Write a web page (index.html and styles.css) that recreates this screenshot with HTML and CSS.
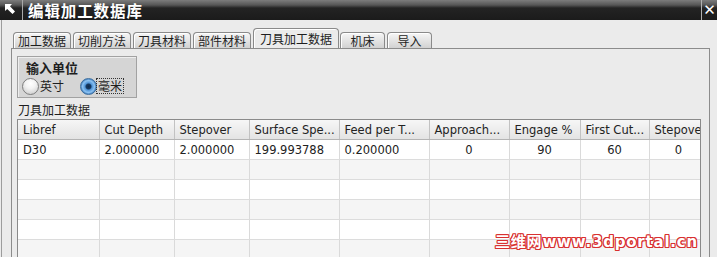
FILE: index.html
```html
<!DOCTYPE html>
<html lang="zh">
<head>
<meta charset="utf-8">
<title>编辑加工数据库</title>
<link rel="stylesheet" href="styles.css">
</head>
<body>
<div class="titlebar">
  <div class="ticon">
    <svg width="12" height="12" viewBox="0 0 12 12"><path d="M1 1 L8 1 L6 3.2 L11 8.5 L8.5 11 L3.2 6 L1 8 Z" fill="#fff"/></svg>
  </div>
  <div class="title">编辑加工数据库</div>
  <div class="close">✕</div>
</div>
<div class="main">
  <div class="tabs">
    <div class="tab">加工数据</div>
    <div class="tab">切削方法</div>
    <div class="tab">刀具材料</div>
    <div class="tab">部件材料</div>
    <div class="tab active">刀具加工数据</div>
    <div class="tab short">机床</div>
    <div class="tab short">导入</div>
  </div>
  <div class="panel">
    <div class="unitbox">
      <div class="unitlabel">输入单位</div>
      <div class="radios">
        <span class="radio"></span><span class="rlabel">英寸</span>
        <span class="radio checked"></span><span class="rlabel focus">毫米</span>
      </div>
    </div>
    <div class="caption">刀具加工数据</div>
    <div class="tablewrap">
      <table class="grid">
        <colgroup>
          <col class="c1"><col class="c2"><col class="c3"><col class="c4"><col class="c5"><col class="c6"><col class="c7"><col class="c8"><col class="c9">
        </colgroup>
        <thead>
          <tr><th>Libref</th><th>Cut Depth</th><th>Stepover</th><th>Surface Spe...</th><th>Feed per T...</th><th>Approach...</th><th>Engage %</th><th>First Cut...</th><th>Stepove</th></tr>
        </thead>
        <tbody>
          <tr><td>D30</td><td>2.000000</td><td>2.000000</td><td>199.993788</td><td>0.200000</td><td class="num">0</td><td class="num">90</td><td class="num">60</td><td class="num">0</td></tr>
          <tr><td></td><td></td><td></td><td></td><td></td><td></td><td></td><td></td><td></td></tr>
          <tr><td></td><td></td><td></td><td></td><td></td><td></td><td></td><td></td><td></td></tr>
          <tr><td></td><td></td><td></td><td></td><td></td><td></td><td></td><td></td><td></td></tr>
          <tr><td></td><td></td><td></td><td></td><td></td><td></td><td></td><td></td><td></td></tr>
          <tr><td></td><td></td><td></td><td></td><td></td><td></td><td></td><td></td><td></td></tr>
        </tbody>
      </table>
    </div>
  </div>
</div>
<div class="watermark">三维网www.3dportal.cn</div>
</body>
</html>
```
FILE: styles.css
```css
html, body {
  margin: 0;
  padding: 0;
}
body {
  width: 717px;
  height: 257px;
  overflow: hidden;
  background: #ebebeb;
  font-family: "Noto Sans CJK SC", "DejaVu Sans", sans-serif;
  color: #1e1e1e;
  position: relative;
}
.titlebar {
  height: 20px;
  display: flex;
  align-items: stretch;
  background: linear-gradient(#7c7c7c 0px, #565656 5px, #232323 8px, #1b1b1b 20px);
}
.ticon {
  width: 22px;
  border-right: 1px solid #a8a8a8;
  display: flex;
  align-items: center;
  justify-content: center;
}
.ticon svg {
  margin: -2px 0 0 -2px;
}
.title {
  padding-left: 5px;
  color: #fff;
  font-weight: bold;
  font-size: 15.5px;
  line-height: 16px;
  padding-top: 2px;
  letter-spacing: 0.9px;
}
.close {
  margin-left: auto;
  width: 15px;
  border-left: 1px solid #b0b0b0;
  color: #fff;
  font-weight: bold;
  font-size: 15px;
  line-height: 20px;
  text-align: center;
  font-family: "DejaVu Sans", sans-serif;
}
.main {
  margin-left: 1px;
  border-left: 1px solid #9c9c9c;
  height: 237px;
}
.tabs {
  display: flex;
  align-items: flex-end;
  height: 28px;
  padding-left: 11px;
}
.tab {
  height: 15px;
  border: 1px solid #8a8a8a;
  border-bottom: none;
  border-radius: 4px 4px 0 0;
  padding: 0 4px;
  margin-right: 2px;
  font-size: 12px;
  line-height: 15px;
  text-align: center;
  background: linear-gradient(#f6f6f6, #d2d2d2);
  box-shadow: inset 1px 1px 0 #ffffff;
}
.tab.short {
  min-width: 35px;
  padding: 0 4px;
  margin-right: 2px;
}
.tab.active {
  height: 19px;
  line-height: 19px;
  background: #ebebeb;
  padding: 0 6px;
  margin-right: 1px;
}
.panel {
  margin-left: 9px;
  width: 699px;
  height: 209px;
  border: 1px solid #8c8c8c;
  border-bottom: none;
  padding: 7px 0 0 5px;
  box-sizing: border-box;
}
.unitbox {
  width: 120px;
  height: 42px;
  box-sizing: border-box;
  background: #d5d5d5;
  border: 1px solid #a2a2a2;
  box-shadow: inset 1px 1px 0 #eeeeee;
  padding: 3px 0 0 4px;
}
.unitlabel {
  font-weight: bold;
  font-size: 13px;
  line-height: 16px;
  padding-left: 4px;
}
.radios {
  display: flex;
  align-items: center;
  height: 20px;
  font-size: 12px;
}
.radio {
  width: 15px;
  height: 15px;
  border-radius: 50%;
  border: 1px solid #7e7e7e;
  background: radial-gradient(circle at 50% 30%, #ffffff 0, #f2f2f2 40%, #c4c4c4 100%);
  flex: none;
}
.radio.checked {
  margin-left: 15px;
  border-color: #3b6d9e;
  background: radial-gradient(circle at 50% 50%, #0f2a4a 0, #163a64 2.5px, #4f93d6 3.5px, #8cc2f2 6px, #4f8ac6 7.5px);
}
.rlabel {
  line-height: 14px;
  padding: 0 1px;
}
.rlabel.focus {
  outline: 1px dotted #333;
  outline-offset: 0;
}
.caption {
  font-size: 12px;
  line-height: 19px;
  padding-top: 2px;
  padding-left: 1px;
}
.tablewrap {
  width: 684px;
  height: 150px;
  box-sizing: border-box;
  border: 1px solid #8a8a8a;
  border-bottom: none;
  overflow: hidden;
  background: #fff;
}
.grid {
  border-collapse: collapse;
  table-layout: fixed;
  width: 690px;
  font-family: "DejaVu Sans", sans-serif;
  font-size: 11.5px;
  color: #222;
}
.c1 { width: 81px; }
.c2 { width: 75px; }
.c3 { width: 75px; }
.c4 { width: 90px; }
.c5 { width: 90px; }
.c6 { width: 80px; }
.c7 { width: 71px; }
.c8 { width: 69px; }
.c9 { width: 59px; }
.grid th {
  height: 19px;
  padding: 0 0 0 5px;
  text-align: left;
  font-weight: normal;
  white-space: nowrap;
  overflow: hidden;
  background: linear-gradient(#f6f6f6, #e3e3e3);
  border-right: 1px solid #c2c2c2;
  border-bottom: 1px solid #b4b4b4;
}
.grid td {
  height: 19px;
  padding: 0 0 0 5px;
  white-space: nowrap;
  overflow: hidden;
  border-right: 1px solid #dadada;
  border-bottom: 1px solid #dcdcdc;
}
.grid td.num {
  text-align: center;
  padding: 0;
}
.grid tbody tr:nth-child(even) td {
  background: #f5f5f5;
}
.watermark {
  position: absolute;
  left: 495px;
  top: 233px;
  font-family: "DejaVu Sans", "Noto Sans CJK SC", sans-serif;
  font-weight: bold;
  font-size: 15px;
  line-height: 18px;
  letter-spacing: 0.8px;
  color: #fff;
  text-shadow: 1px 0 0 #d83030, -1px 0 0 #d83030, 0 1px 0 #d83030, 0 -1px 0 #d83030, 1px 1px 0 #d83030, -1px -1px 0 #d83030, 1px -1px 0 #d83030, -1px 1px 0 #d83030;
}
```
